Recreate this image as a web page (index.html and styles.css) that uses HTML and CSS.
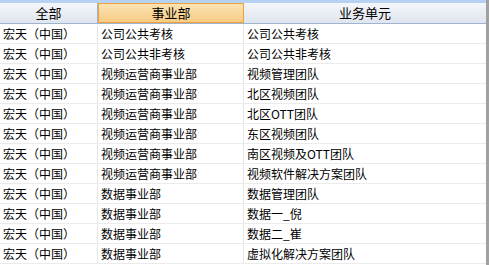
FILE: index.html
```html
<!DOCTYPE html>
<html>
<head>
<meta charset="utf-8">
<link rel="stylesheet" href="styles.css">
</head>
<body>
<div class="grid">
  <div class="topband"></div>
  <div class="row head">
    <div class="c c1 hc">全部</div>
    <div class="c c2 hc active">事业部</div>
    <div class="c c3 hc">业务单元</div>
  </div>
  <div class="row"><div class="c c1">宏天（中国）</div><div class="c c2">公司公共考核</div><div class="c c3">公司公共考核</div></div>
  <div class="row"><div class="c c1">宏天（中国）</div><div class="c c2">公司公共非考核</div><div class="c c3">公司公共非考核</div></div>
  <div class="row"><div class="c c1">宏天（中国）</div><div class="c c2">视频运营商事业部</div><div class="c c3">视频管理团队</div></div>
  <div class="row"><div class="c c1">宏天（中国）</div><div class="c c2">视频运营商事业部</div><div class="c c3">北区视频团队</div></div>
  <div class="row"><div class="c c1">宏天（中国）</div><div class="c c2">视频运营商事业部</div><div class="c c3">北区OTT团队</div></div>
  <div class="row"><div class="c c1">宏天（中国）</div><div class="c c2">视频运营商事业部</div><div class="c c3">东区视频团队</div></div>
  <div class="row"><div class="c c1">宏天（中国）</div><div class="c c2">视频运营商事业部</div><div class="c c3">南区视频及OTT团队</div></div>
  <div class="row"><div class="c c1">宏天（中国）</div><div class="c c2">视频运营商事业部</div><div class="c c3">视频软件解决方案团队</div></div>
  <div class="row"><div class="c c1">宏天（中国）</div><div class="c c2">数据事业部</div><div class="c c3">数据管理团队</div></div>
  <div class="row"><div class="c c1">宏天（中国）</div><div class="c c2">数据事业部</div><div class="c c3">数据一_倪</div></div>
  <div class="row"><div class="c c1">宏天（中国）</div><div class="c c2">数据事业部</div><div class="c c3">数据二_崔</div></div>
  <div class="row"><div class="c c1">宏天（中国）</div><div class="c c2">数据事业部</div><div class="c c3">虚拟化解决方案团队</div></div>
</div>
</body>
</html>
```
FILE: styles.css
```css
html, body {
  margin: 0;
  padding: 0;
  background: #ffffff;
}
.grid {
  width: 486px;
  height: 265px;
  border-right: 3px solid #a0a0a0;
  overflow: hidden;
  font-family: "Noto Sans CJK SC", "Noto Sans", sans-serif;
  font-size: 12px;
  color: #000;
}
.topband {
  height: 3px;
  background: #b7d1f3;
}
.row {
  display: flex;
  height: 19px;
  border-bottom: 1px solid #ebebeb;
}
.head {
  height: 20px;
  border-bottom: 1px solid #9fb4cf;
  background: linear-gradient(#f3f6fa, #dfe5ee);
}
.c {
  line-height: 19px;
  white-space: nowrap;
  overflow: hidden;
  box-sizing: border-box;
  padding-left: 3px;
}
.c1 { width: 98px; border-right: 1px solid #e6e6e6; }
.c2 { width: 146px; border-right: 1px solid #e6e6e6; }
.c3 { flex: 1; }
.hc {
  text-align: center;
  padding-left: 0;
  line-height: 20px;
  font-size: 13px;
  border-right: 1px solid #9fb4cf;
}
.head .c3 { border-right: none; }
.hc.active {
  background: linear-gradient(#fbe2b4, #f6cc84);
  border: 1px solid #f0a038;
  line-height: 18px;
}
```
